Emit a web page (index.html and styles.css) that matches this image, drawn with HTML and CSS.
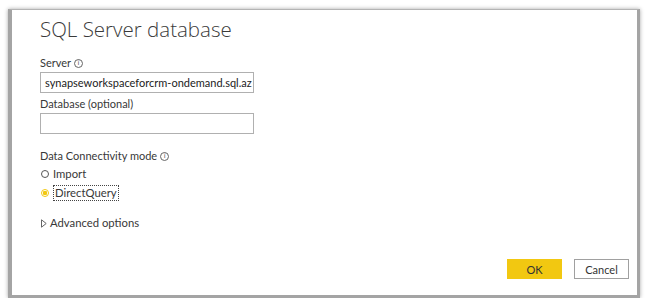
FILE: index.html
```html
<!DOCTYPE html>
<html lang="en">
<head>
    <meta charset="UTF-8">
    <title>SQL Server database</title>
    <link rel="stylesheet" href="styles.css">
</head>
<body>
    <div class="dialog">
        <h1 class="title">SQL Server database</h1>

        <div class="field">
            <label class="label">Server <span class="info">i</span></label>
            <div class="input">synapseworkspaceforcrm-ondemand.sql.az</div>
        </div>

        <div class="field">
            <label class="label">Database (optional)</label>
            <div class="input"></div>
        </div>

        <div class="mode">
            <div class="label">Data Connectivity mode <span class="info">i</span></div>
            <div class="radio"><span class="dot"></span><span>Import</span></div>
            <div class="radio checked"><span class="dot"></span><span class="focus">DirectQuery</span></div>
        </div>

        <div class="advanced">
            <svg class="arrow" width="6" height="9" viewBox="0 0 6 9"><path d="M0.5 0.8 L5.2 4.5 L0.5 8.2 Z" fill="none" stroke="#666" stroke-width="1"/></svg>
            Advanced options
        </div>

        <div class="buttons">
            <button class="btn ok">OK</button>
            <button class="btn cancel">Cancel</button>
        </div>
    </div>
</body>
</html>
```

FILE: styles.css
```css
* {
    margin: 0;
    padding: 0;
    box-sizing: border-box;
}

body {
    background: #fff;
    font-family: Lato, "Open Sans", sans-serif;
    font-size: 11px;
    color: #383838;
    padding: 9px 10px 0 8px;
}

.dialog {
    width: 632px;
    height: 289px;
    background: #fff;
    border-left: 4px solid #a4a4a4;
    border-top: 1px solid #b4b4b4;
    border-right: 3px solid #a4a4a4;
    border-bottom: 3px solid #a4a4a4;
    box-shadow: 0 0 4px rgba(0, 0, 0, 0.35);
    padding: 4px 0 0 28px;
    display: flex;
    flex-direction: column;
}

.title {
    font-family: "Open Sans", sans-serif;
    font-weight: 300;
    font-size: 20.5px;
    color: #3a3a3a;
    line-height: 30px;
    margin-bottom: 12px;
}

.label {
    display: flex;
    align-items: center;
    gap: 3px;
    line-height: 14px;
    margin-bottom: 2px;
}

.info {
    width: 9px;
    height: 9px;
    border: 1px solid #666;
    border-radius: 50%;
    font-size: 7px;
    line-height: 7px;
    text-align: center;
    color: #555;
    font-family: "DejaVu Sans", sans-serif;
}

.input {
    width: 214px;
    height: 21px;
    border: 1px solid #b0b0b0;
    padding: 2px 4px;
    line-height: 15px;
    white-space: nowrap;
    overflow: hidden;
    color: #222;
    margin-bottom: 4px;
}

.mode {
    margin-top: 11px;
}

.mode .label {
    margin-bottom: 1px;
}

.radio {
    display: flex;
    align-items: center;
    gap: 4px;
    height: 19px;
    font-size: 11.3px;
}

.radio .dot {
    width: 8px;
    height: 8px;
    border: 1px solid #555;
    border-radius: 50%;
    margin-left: 1px;
}

.radio.checked .dot {
    border-color: #f2c811;
    background: radial-gradient(circle, #f2c811 0 2px, #fff 2.5px);
}

.focus {
    border: 1px dotted #444;
    padding: 0 1px;
    line-height: 14px;
}

.advanced {
    margin-top: 13px;
    display: flex;
    align-items: center;
    gap: 3px;
    line-height: 16px;
    font-size: 11.3px;
}

.arrow {
    margin-left: 1px;
}

.buttons {
    margin-top: auto;
    margin-bottom: 16px;
    margin-right: 8px;
    display: flex;
    justify-content: flex-end;
    gap: 12px;
}

.btn {
    width: 55px;
    height: 20px;
    font-family: Lato, sans-serif;
    font-size: 11px;
    color: #333;
}

.ok {
    background: #f2c811;
    border: none;
}

.cancel {
    background: #fff;
    border: 1px solid #a0a0a0;
}
```
